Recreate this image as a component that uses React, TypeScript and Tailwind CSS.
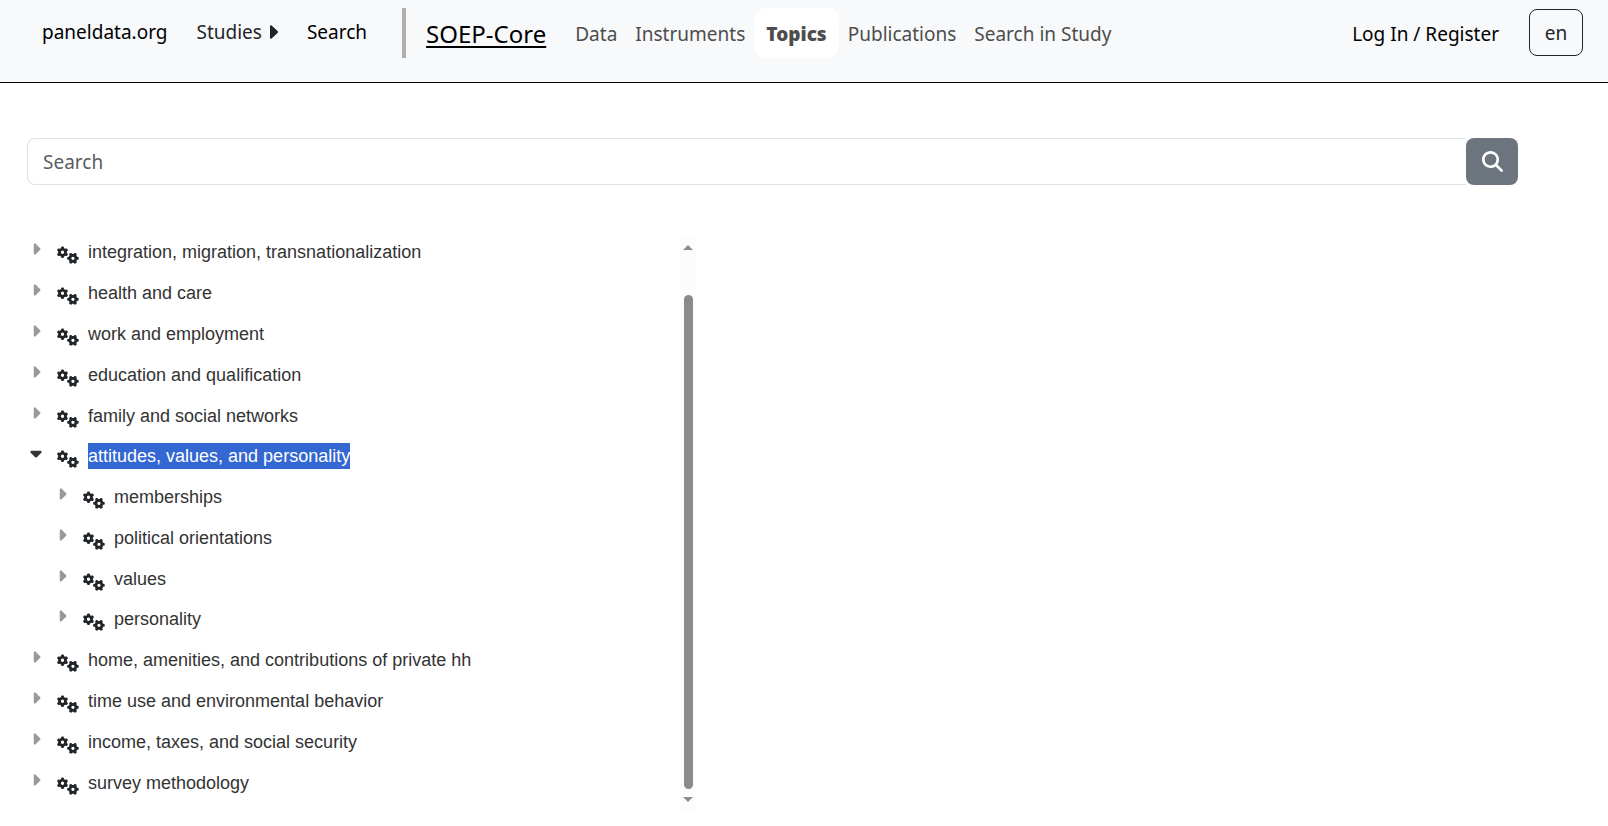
import { useState } from "react";
import { FaCaretDown, FaCaretRight, FaGears, FaMagnifyingGlass } from "react-icons/fa6";

interface Topic {
  title: string;
  children?: Topic[];
}

const topics: Topic[] = [
  { title: "integration, migration, transnationalization" },
  { title: "health and care" },
  { title: "work and employment" },
  { title: "education and qualification" },
  { title: "family and social networks" },
  {
    title: "attitudes, values, and personality",
    children: [
      { title: "memberships" },
      { title: "political orientations" },
      { title: "values" },
      { title: "personality" },
    ],
  },
  { title: "home, amenities, and contributions of private hh" },
  { title: "time use and environmental behavior" },
  { title: "income, taxes, and social security" },
  { title: "survey methodology" },
];

const studyLinks = ["Data", "Instruments", "Topics", "Publications", "Search in Study"];

function Header() {
  return (
    <header className="flex h-[83px] items-start border-b border-black bg-[#f8f9fb] pt-2 pr-[25px] pl-[42px] text-black">
      <nav className="flex h-12 items-center gap-[29px]" aria-label="Main">
        <a href="#home">paneldata.org</a>
        <button type="button" className="flex items-center gap-2 text-[#212529]">
          Studies
          <svg viewBox="0 0 8 14" className="h-[14px] w-2" fill="currentColor" aria-hidden="true">
            <path d="M0 1.2C0 .2.9-.2 1.6.5l6 5.6c.5.5.5 1.3 0 1.8l-6 5.6C.9 14.2 0 13.8 0 12.8Z" />
          </svg>
        </button>
        <a href="#search">Search</a>
      </nav>
      <div className="ml-[35px] h-[50px] w-1 shrink-0 bg-[#afafaf]" />
      <nav className="flex h-[50px] items-center" aria-label="Study">
        <a href="#soep-core" className="mx-5 pt-0.5 text-2xl underline decoration-2 underline-offset-3">SOEP-Core</a>
        <div className="flex items-center">
          {studyLinks.map((link) => (
            <a
              key={link}
              href="#study"
              className={
                link === "Topics"
                  ? "flex h-[50px] items-center rounded-xl bg-white px-3 pt-0.5 font-black text-[#4d4d4d]"
                  : "px-[9px] pt-0.5 text-[#4d4d4d]"
              }
            >
              {link}
            </a>
          ))}
        </div>
      </nav>
      <div className="ml-auto flex h-12 items-center gap-[30px]">
        <a href="#login" className="pt-1">Log In / Register</a>
        <button type="button" className="h-[47px] w-[54px] rounded-lg border border-[#212529] pt-0.5 text-[#212529]">en</button>
      </div>
    </header>
  );
}

function SearchBar() {
  return (
    <form className="flex h-[47px]" onSubmit={(e) => e.preventDefault()}>
      <input
        type="text"
        aria-label="Search topics"
        placeholder="Search"
        className="min-w-0 flex-1 rounded-l-lg border border-r-0 border-[#dee2e6] px-[15px] pt-0.5 outline-none placeholder:text-[#595c5f]"
      />
      <button type="submit" aria-label="Search" className="flex w-[52px] items-center justify-center rounded-lg bg-[#6c757d] text-white">
        <FaMagnifyingGlass size={21} />
      </button>
    </form>
  );
}

interface RowProps {
  topic: Topic;
  nested?: boolean;
  open: boolean;
  onToggle: () => void;
}

function TopicRow({ topic, nested, open, onToggle }: RowProps) {
  return (
    <li className={nested ? "flex items-center pl-[26px]" : "flex items-center"}>
      <button type="button" aria-label={`Toggle ${topic.title}`} onClick={onToggle} className="flex w-[30px] pb-[6px]">
        {open ? <FaCaretDown size={18} className="text-[#333]" /> : <FaCaretRight size={18} className="text-[#999]" />}
      </button>
      <FaGears size={22} className="mt-[6px] text-[#212529]" />
      <span className={open ? "ml-[9px] bg-[#3367d1] leading-[26px] text-white" : "ml-[9px] leading-[26px]"}>{topic.title}</span>
    </li>
  );
}

function TopicTree() {
  const [opened, setOpened] = useState("attitudes, values, and personality");
  const toggle = (title: string) => setOpened(opened === title ? "" : title);

  return (
    <ul className="grid h-[571px] flex-1 auto-rows-fr font-['Liberation_Sans',Arial,sans-serif] text-lg text-[#333]">
      {topics.flatMap((topic) => [
        <TopicRow key={topic.title} topic={topic} open={opened === topic.title} onToggle={() => toggle(topic.title)} />,
        ...(opened === topic.title ? topic.children || [] : []).map((child) => (
          <TopicRow key={child.title} topic={child} nested open={false} onToggle={() => {}} />
        )),
      ])}
    </ul>
  );
}

function ScrollTrack() {
  return (
    <div className="mt-[3px] flex h-[577px] w-[14px] flex-col items-center justify-between bg-[#fcfcfc] py-[10px]" aria-hidden="true">
      <svg viewBox="0 0 10 5" className="h-[5px] w-[10px]" fill="#8b8b8b"><path d="M5 0l5 5H0z" /></svg>
      <div className="mt-[45px] mb-2 w-[9px] flex-1 rounded-full bg-[#8b8b8b]" />
      <svg viewBox="0 0 10 5" className="h-[5px] w-[10px]" fill="#8b8b8b"><path d="M0 0h10L5 5z" /></svg>
    </div>
  );
}

export default function App() {
  return (
    <div className="bg-white font-['Noto_Sans','Open_Sans',sans-serif] text-[19px]">
      <Header />
      <main className="pt-[55px] pr-[90px] pl-[27px]">
        <SearchBar />
        <div className="pt-[47px] pr-[6px]">
          <div className="flex w-[45%]">
            <TopicTree />
            <ScrollTrack />
          </div>
        </div>
      </main>
    </div>
  );
}
